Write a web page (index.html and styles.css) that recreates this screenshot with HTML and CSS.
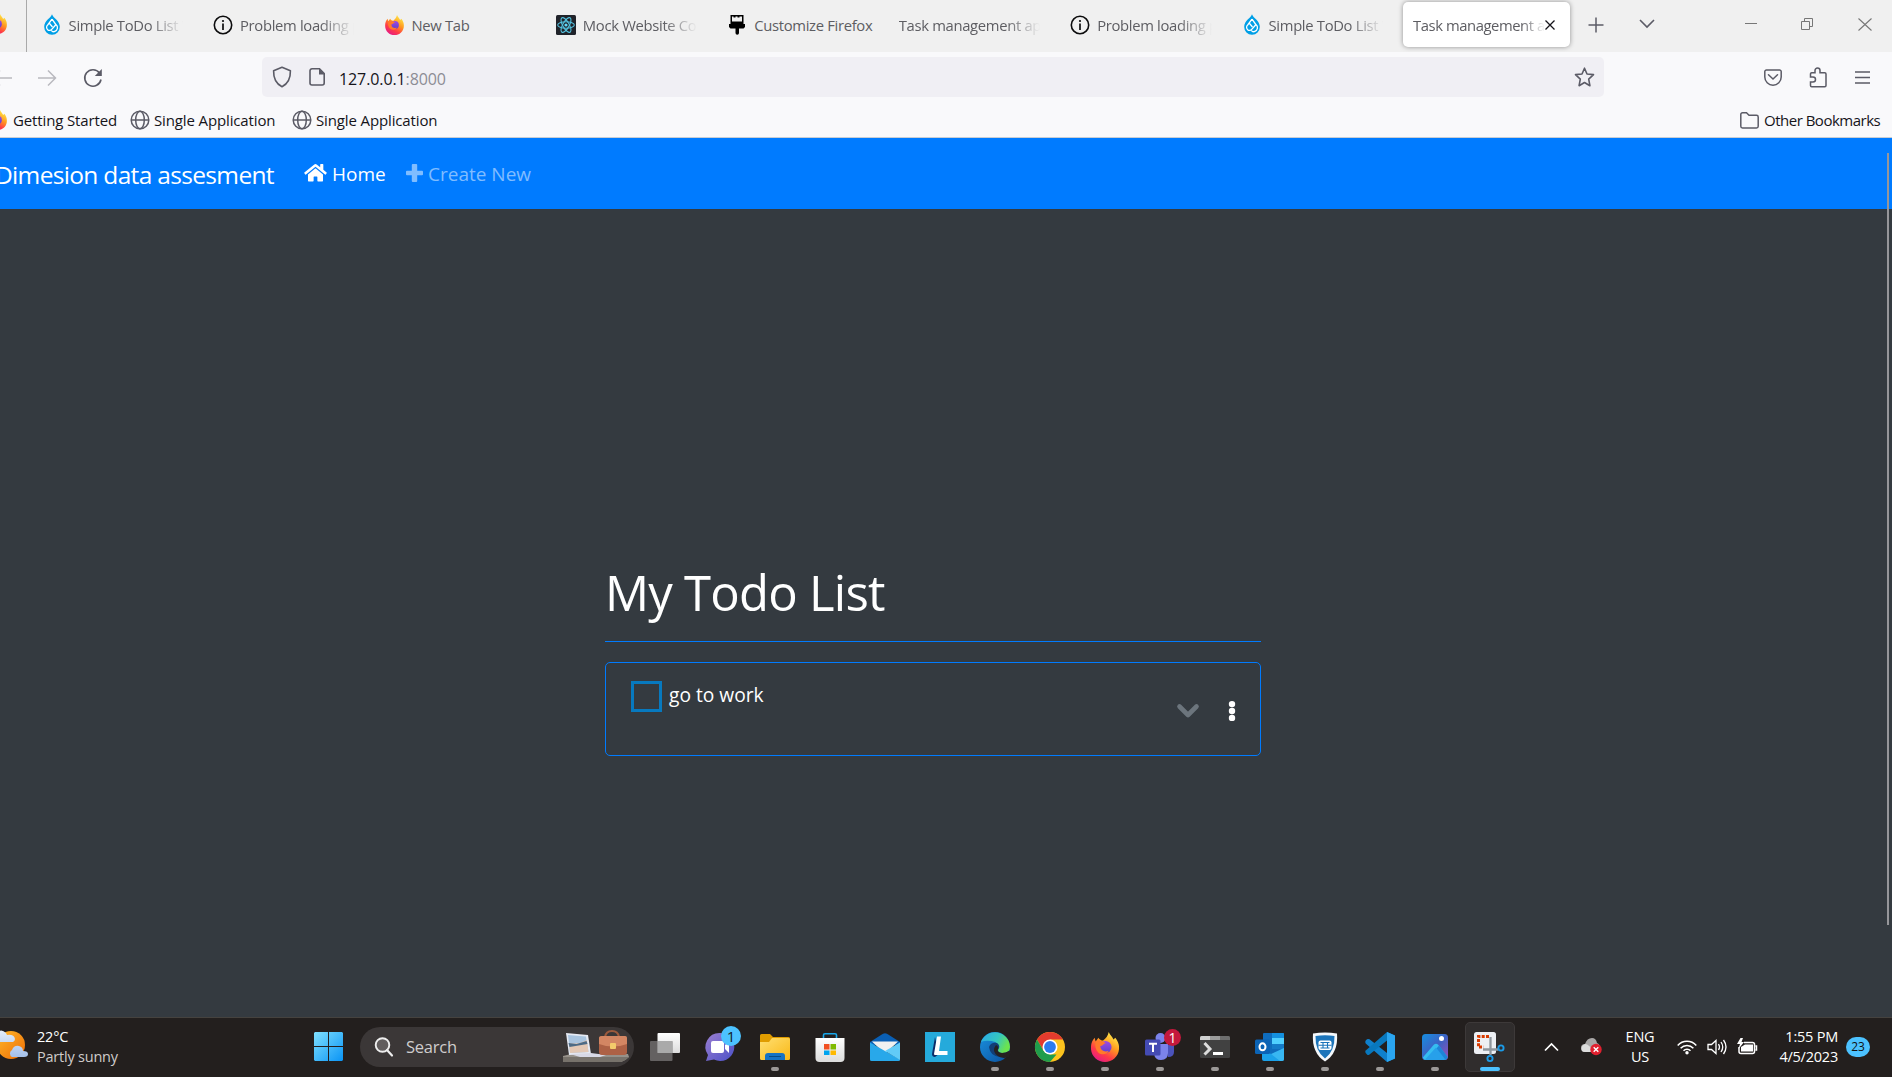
FILE: index.html
```html
<!DOCTYPE html>
<html lang="en">
<head>
<meta charset="utf-8">
<title>Task management app</title>
<link rel="stylesheet" href="styles.css">
</head>
<body>
<svg class="defs" aria-hidden="true">
  <defs>
    <linearGradient id="fxBody" x1=".8" y1="0" x2=".2" y2="1"><stop offset="0" stop-color="#fff44f"/><stop offset=".4" stop-color="#ff9a1f"/><stop offset=".7" stop-color="#ff3b47"/><stop offset="1" stop-color="#e01590"/></linearGradient>
    <linearGradient id="fxGlobe" x1="0" y1="0" x2="0" y2="1"><stop offset="0" stop-color="#a04be0"/><stop offset="1" stop-color="#5b3fd0"/></linearGradient>
    <linearGradient id="win" x1="0" y1="0" x2="1" y2="1"><stop offset="0" stop-color="#7fe0ff"/><stop offset="1" stop-color="#0a94f5"/></linearGradient>
    <linearGradient id="sun" x1="0" y1="0" x2="1" y2="1"><stop offset="0" stop-color="#ffb92a"/><stop offset="1" stop-color="#ee6c05"/></linearGradient>
    <linearGradient id="chat" x1="0" y1="0" x2="1" y2="1"><stop offset="0" stop-color="#9b7fd0"/><stop offset="1" stop-color="#4b50c8"/></linearGradient>
    <linearGradient id="folder" x1="0" y1="0" x2="1" y2="1"><stop offset="0" stop-color="#ffdf72"/><stop offset="1" stop-color="#f9b816"/></linearGradient>
    <linearGradient id="edgeTop" x1="0" y1="0" x2="1" y2=".4"><stop offset="0" stop-color="#2aa9ea"/><stop offset=".6" stop-color="#35c6c0"/><stop offset="1" stop-color="#6be34f"/></linearGradient>
    <linearGradient id="edgeLow" x1="0" y1="0" x2="1" y2="1"><stop offset="0" stop-color="#1a92e0"/><stop offset="1" stop-color="#0b4f9c"/></linearGradient>
    <linearGradient id="photo" x1="0" y1="0" x2="1" y2="1"><stop offset="0" stop-color="#168fe0"/><stop offset=".5" stop-color="#3c62c4"/><stop offset="1" stop-color="#9a50b8"/></linearGradient>
    <linearGradient id="white" x1="0" y1="0" x2="0" y2="1"><stop offset="0" stop-color="#fff"/><stop offset="1" stop-color="#dcdcdc"/></linearGradient>
    <linearGradient id="cloud" x1="0" y1="0" x2="0" y2="1"><stop offset="0" stop-color="#e4effc"/><stop offset="1" stop-color="#a3bfe9"/></linearGradient>
  </defs>
  <symbol id="firefox" viewBox="0 0 30 32">
    <path d="M19 0c1 3 4 5 5 8l2-2c3 4 4 7 4 11 0 9-7 15-15 15S0 26 0 17c0-4 1-8 4-11l1 4 3-4c1 2 3 3 5 3 3-2 5-5 6-9z" fill="url(#fxBody)"/>
    <circle cx="15.500" cy="16" r="6.500" fill="url(#fxGlobe)"/>
    <path d="M5 10c4-2 8 0 11 2-3 0-3 3-6 3 0 5 5 7 9 5-2 4-7 5-11 2-3-3-4-7-3-12z" fill="#ff7a2a"/>
  </symbol>
  <symbol id="drupal" viewBox="0 0 16 21">
    <path d="M8 .3c1 3.600 7.800 6.500 7.800 12.500A7.700 7.700 0 0 1 8 20.700 7.700 7.700 0 0 1 .2 12.800C.2 6.800 7 3.900 8 .3z" fill="#009fe6"/>
    <path d="M8 5.200 11.500 10M8 5.200 3.700 11a3 3 0 1 0 4.500 3.800L12 10.500a4 4 0 0 1-1.500 7q-2 .8-3-1M5.500 9.500l3 3.500" fill="none" stroke="#fff" stroke-width="1.300"/>
  </symbol>
  <symbol id="info" viewBox="0 0 20 20">
    <circle cx="10" cy="10" r="8.700" fill="none" stroke="#0c0c0d" stroke-width="1.600"/>
    <path d="M10 8.500V15" stroke="#0c0c0d" stroke-width="1.700"/><circle cx="10" cy="6" r="1.100" fill="#0c0c0d"/>
  </symbol>
  <symbol id="globe" viewBox="0 0 20 20">
    <g fill="none" stroke="#5b5b66" stroke-width="1.500"><circle cx="10" cy="10" r="8.800"/><ellipse cx="10" cy="10" rx="4.300" ry="8.800"/><path d="M1 10h18"/></g>
  </symbol>
</svg>

<header class="tabs">
  <div class="pinned"><svg class="fox"><use href="#firefox"/></svg></div>
  <div class="tab"><span class="ico"><svg width="16" height="21"><use href="#drupal"/></svg></span><span class="label fade">Simple ToDo List W</span></div>
  <div class="tab"><span class="ico"><svg width="20" height="20"><use href="#info"/></svg></span><span class="label fade">Problem loading page</span></div>
  <div class="tab"><span class="ico"><svg class="fox"><use href="#firefox"/></svg></span><span class="label">New Tab</span></div>
  <div class="tab"><span class="ico"><svg width="20" height="20" viewBox="0 0 20 20"><rect width="20" height="20" rx="1.500" fill="#20232a"/><g fill="none" stroke="#53c1de" stroke-width="1.100"><ellipse cx="10" cy="10" rx="8.300" ry="3.200"/><ellipse cx="10" cy="10" rx="8.300" ry="3.200" transform="rotate(60 10 10)"/><ellipse cx="10" cy="10" rx="8.300" ry="3.200" transform="rotate(120 10 10)"/></g><circle cx="10" cy="10" r="1.600" fill="#61dafb"/></svg></span><span class="label fade">Mock Website Content</span></div>
  <div class="tab"><span class="ico"><svg width="16" height="20" viewBox="0 0 16 20"><path d="M1.500 0h13v9h1.500v3l-1.500 1.500H10V18a1.500 1.500 0 0 1-3.500 0v-4.500H1.500L0 12V9h1.500z" fill="#000"/><path d="M3 1.500h1.500v1h2v-1h2v1h2v-1H13V6.500H3z" fill="#f0f0f0"/></svg></span><span class="label">Customize Firefox</span></div>
  <div class="tab bare"><span class="label fade">Task management app</span></div>
  <div class="tab"><span class="ico"><svg width="20" height="20"><use href="#info"/></svg></span><span class="label fade">Problem loading page</span></div>
  <div class="tab"><span class="ico"><svg width="16" height="21"><use href="#drupal"/></svg></span><span class="label fade">Simple ToDo List W</span></div>
  <div class="tab bare active"><span class="label fade">Task management app</span><svg width="10" height="10" viewBox="0 0 10 10"><path d="M.5.5l9 9M9.500.5l-9 9" stroke="#15141a" stroke-width="1.300"/></svg></div>
  <svg class="add" width="16" height="16" viewBox="0 0 16 16"><path d="M8 .5v15M.5 8h15" stroke="#5b5b66" stroke-width="1.500"/></svg>
  <svg class="all" width="16" height="10" viewBox="0 0 16 10"><path d="M1 1l7 7 7-7" fill="none" stroke="#5b5b66" stroke-width="1.600"/></svg>
  <div class="winbtns">
    <svg width="12" height="14" viewBox="0 0 12 14"><path d="M0 6.500h12" stroke="#777"/></svg>
    <svg width="12" height="12" viewBox="0 0 12 12"><path d="M.5 3.500h8v8h-8zM3.500 3.500v-3h8v8h-3" fill="none" stroke="#777"/></svg>
    <svg width="14" height="13" viewBox="0 0 14 13"><path d="M.5.500l13 12M13.500.500l-13 12" stroke="#777" stroke-width="1.100"/></svg>
  </div>
</header>

<div class="toolbar">
  <svg class="back" width="15" height="18" viewBox="0 0 15 18"><path d="M0 9h15M3 1.500-4.500 9 3 16.500" fill="none" stroke="#b9b9bf" stroke-width="1.500"/></svg>
  <svg class="fwd" width="19" height="18" viewBox="0 0 19 18"><path d="M0 9h18M10 1.500 17.500 9 10 16.500" fill="none" stroke="#b9b9bf" stroke-width="1.500"/></svg>
  <svg class="reload" width="20" height="20" viewBox="0 0 20 20"><path d="M16.500 5A8.200 8.200 0 1 0 18 11.500" fill="none" stroke="#5b5b66" stroke-width="1.600"/><path d="M18.800 1v7h-7z" fill="#5b5b66"/></svg>
  <div class="url">
    <svg class="shield" width="20" height="22" viewBox="0 0 20 22"><path d="M10 1.200 18.400 4.800C18.600 12 16.500 17.500 10 20.800 3.500 17.500 1.400 12 1.600 4.800z" fill="none" stroke="#5b5b66" stroke-width="1.600" stroke-linejoin="round"/></svg>
    <svg class="page" width="17" height="20" viewBox="0 0 17 20"><path d="M3 1.800h7.500L15.200 6.500V16a2 2 0 0 1-2 2H3a2 2 0 0 1-2-2V3.800a2 2 0 0 1 2-2z" fill="none" stroke="#5b5b66" stroke-width="1.600"/><path d="M10 1.500v6h6z" fill="#5b5b66"/></svg>
    <span class="addr">127.0.0.1<em>:8000</em></span>
    <svg class="star" width="21" height="20" viewBox="0 0 21 20"><path d="M10.500 1.200 13 7l6.500.6-4.800 4.500 1.200 6.600-5.400-3.200-5.400 3.200 1.200-6.600L1.500 7.600 8 7z" fill="none" stroke="#5b5b66" stroke-width="1.600" stroke-linejoin="round"/></svg>
  </div>
  <svg class="pocket" width="18" height="17" viewBox="0 0 18 17"><path d="M2.500 1h13A1.600 1.600 0 0 1 17.200 2.600V8A8.200 8.200 0 0 1 .8 8V2.600A1.600 1.600 0 0 1 2.500 1zM4.500 5.800 9 10l4.500-4.200" fill="none" stroke="#5b5b66" stroke-width="1.500" stroke-linecap="round"/></svg>
  <svg class="puzzle" width="18" height="21" viewBox="0 0 18 21"><path d="M1.500 10V7a1.200 1.200 0 0 1 1.200-1.200H6V3.500a2.500 2.500 0 0 1 5 0v2.300h4.800A1.200 1.200 0 0 1 17 7v11.600a1.200 1.200 0 0 1-1.200 1.200H2.700a1.200 1.200 0 0 1-1.200-1.200V15H4a2.500 2.500 0 0 0 0-5z" fill="none" stroke="#5b5b66" stroke-width="1.500"/></svg>
  <svg class="menu" width="15" height="13" viewBox="0 0 15 13"><path d="M0 1h15M0 6.500h15M0 12h15" stroke="#5b5b66" stroke-width="1.300"/></svg>
</div>

<nav class="bookmarks">
  <svg class="fox cut"><use href="#firefox"/></svg><span class="bm1">Getting Started</span>
  <svg class="g1" width="20" height="20"><use href="#globe"/></svg><span class="bm">Single Application</span>
  <svg class="g2" width="20" height="20"><use href="#globe"/></svg><span class="bm">Single Application</span>
  <svg class="fold" width="19" height="17" viewBox="0 0 19 17"><path d="M2.500.800H6.500L9 3.300h7.500A1.700 1.700 0 0 1 18.200 5v9.300A1.700 1.700 0 0 1 16.500 16h-14A1.700 1.700 0 0 1 .8 14.300V2.500A1.700 1.700 0 0 1 2.500.8z" fill="none" stroke="#5b5b66" stroke-width="1.500"/></svg><span class="other">Other Bookmarks</span>
</nav>

<div class="site">
  <nav class="navbar">
    <span class="brand">Dimesion data assesment</span>
    <svg class="home" width="23" height="18" viewBox="0 0 576 460"><path d="M280 116 96 267v164a16 16 0 0 0 16 16h112a16 16 0 0 0 16-16v-96a16 16 0 0 1 16-16h64a16 16 0 0 1 16 16v96a16 16 0 0 0 16 16h112a16 16 0 0 0 16-16V267L296 116a12 12 0 0 0-16 0zM572 219l-84-69V12a12 12 0 0 0-12-12h-56a12 12 0 0 0-12 12v72L318 11a48 48 0 0 0-61 0L4 219a12 12 0 0 0-1 17l25 31a12 12 0 0 0 17 1L280 75a12 12 0 0 1 16 0l235 193a12 12 0 0 0 17-1l25-31a12 12 0 0 0-1-17z" fill="#fff"/></svg>
    <span class="homelink">Home</span>
    <svg class="plus" width="17" height="18" viewBox="0 0 17 18"><path d="M6.800 0h3.400a1 1 0 0 1 1 1v5.700H16a1 1 0 0 1 1 1v2.600a1 1 0 0 1-1 1h-4.800V17a1 1 0 0 1-1 1H6.800a1 1 0 0 1-1-1v-5.700H1a1 1 0 0 1-1-1V7.700a1 1 0 0 1 1-1h4.800V1a1 1 0 0 1 1-1z" fill="#80bdff"/></svg>
    <span class="create">Create New</span>
  </nav>
  <div class="scroll"></div>
  <main>
    <h1><span>My Todo List</span></h1>
    <section class="card">
      <span class="box"></span><span class="todo">go to work</span>
      <svg class="chev" width="22" height="14" viewBox="0 0 22 14"><path d="M2.500 2.500 11 11l8.500-8.500" fill="none" stroke="#6c757d" stroke-width="4.600" stroke-linejoin="round" stroke-linecap="round"/></svg>
      <svg class="dots" width="8" height="20" viewBox="0 0 8 20" fill="#fff"><circle cx="4" cy="3.100" r="3.200"/><circle cx="4" cy="10" r="3.200"/><circle cx="4" cy="16.900" r="3.200"/></svg>
    </section>
  </main>
</div>

<footer class="taskbar">
  <svg class="weather" width="29" height="30" viewBox="0 0 29 30"><circle cx="12" cy="15" r="14" fill="url(#sun)"/><path d="M-2 12V3q4-5 9 0 1 2 1 2 7-1 8 4 0 2-2 3zM13 27a4 4 0 0 1 0-7q2-5 7-4 4 1 4 5 5 0 5 3t-4 3z" fill="url(#cloud)"/></svg>
  <div class="wtext"><span class="temp">22°C</span><span class="cond">Partly sunny</span></div>
  <svg class="start" width="29" height="29" viewBox="0 0 29 29"><path d="M1 0h13v14H0V1zM15 0h13l1 1v13H15zM0 15h14v14H1l-1-1zM15 15h14v13l-1 1H15z" fill="url(#win)"/></svg>
  <div class="search">
    <svg class="mag" width="20" height="20" viewBox="0 0 20 20"><circle cx="8.500" cy="8" r="6.800" fill="#615d5d" stroke="#eee" stroke-width="1.900"/><path d="M13 13l5 5.500" stroke="#eee" stroke-width="2.200" stroke-linecap="round"/></svg>
    <span>Search</span>
    <svg class="desk" width="67" height="33" viewBox="0 0 67 33">
      <path d="M0 26 8 24h57l1 3q-4 4-8 5H0z" fill="#96918a"/><path d="M0 27h66q-4 4-8 5H0z" fill="#77726b"/>
      <path d="M3 3l22 2 3 19-22 1z" fill="#e6eaf3"/><path d="M5 5l18 1.600 2.500 15.400L7 23z" fill="#a9c4df"/><path d="M6 13q9 2 18-3l1.500 12L7 23z" fill="#e3c8b5"/><path d="M5.500 13l8 1 10-3 1 3-18 3z" fill="#4d6b86"/><path d="M7 24l21-1 15 2-6 2H17z" fill="#d8d9e6"/>
      <path d="M42 7q1-6 7-6t7 6" fill="none" stroke="#9d5a3c" stroke-width="2"/><rect x="36" y="6" width="28" height="19" rx="3" fill="#ad6145"/><path d="M36 8q0-2 3-2h23q2 0 2 2v6q-14 5-28 0z" fill="#d38663"/><rect x="47" y="13" width="6" height="6" rx="1" fill="#f3ca6b"/>
    </svg>
  </div>
  <div class="apps">
    <div class="app"><svg viewBox="0 0 30 30"><rect x="7.500" y="1" width="22.500" height="20" rx="1" fill="url(#white)"/><rect x="0" y="9" width="22.500" height="20" rx="1" fill="#747272" fill-opacity=".8"/><path d="M7.500 9h15v12h-15z" fill="#aaa"/></svg></div>
    <div class="app"><svg viewBox="0 0 30 30"><path d="M15 1a14 14 0 1 1-6 26.500L1 29q1-3 2-6A14 14 0 0 1 15 1z" fill="url(#chat)"/><rect x="6" y="9" width="13" height="12" rx="2" fill="#fff"/><path d="M20 13l4-3v11l-4-4z" fill="#fff"/></svg><b class="badge sky">1</b></div>
    <div class="app run"><svg viewBox="0 0 30 30"><path d="M0 3.500A1.500 1.500 0 0 1 1.500 2H10l3 3h15.500A1.500 1.500 0 0 1 30 6.500V12H0z" fill="#e09c00"/><path d="M0 10h9l3-4h16.500A1.500 1.500 0 0 1 30 7.500v19a1.500 1.500 0 0 1-1.500 1.500h-27A1.500 1.500 0 0 1 0 26.500z" fill="url(#folder)"/><path d="M5 28v-4q0-3 3-3h14q3 0 3 3v4z" fill="#1673c4"/><path d="M9 24.500h12" stroke="#084c86"/></svg></div>
    <div class="app"><svg viewBox="0 0 30 30"><path d="M8.500 7V3q0-1.300 1.500-1.300h10q1.500 0 1.500 1.300v4" fill="none" stroke="#18a7ea" stroke-width="1.600"/><path d="M.5 6h29v20q0 4-4 4h-21q-4 0-4-4z" fill="url(#white)"/><path d="M9 12h5.500v5.500H9z" fill="#f25022"/><path d="M15.500 12H21v5.500h-5.500z" fill="#7fba00"/><path d="M9 18.500h5.500V23H9z" fill="#00a4ef"/><path d="M15.500 18.500H21V23h-5.500z" fill="#ffb900"/></svg></div>
    <div class="app"><svg viewBox="0 0 30 30"><path d="M0 10 13 1.800q2-1.200 4 0L30 10v3H0z" fill="#0a5fb4"/><path d="M2 9.500h26L15 22z" fill="#f1f1f1"/><path d="M0 10.500 30 27.500V28q0 1-1.500 1h-27Q0 29 0 27.500z" fill="#28a8ea"/><path d="M30 10.500 15 19l15 9z" fill="#62cbf7"/></svg></div>
    <div class="app"><svg viewBox="0 0 30 30"><rect width="30" height="30" fill="#25aadb"/><path d="M10 5 7 22q0 3 3 3l4-3z" fill="#0b2c69"/><path d="M12 4.500h4L14 19h8.500v4H10q-1 0-1-1z" fill="#fff"/></svg></div>
    <div class="app run"><svg viewBox="0 0 30 30"><circle cx="15" cy="15" r="15" fill="url(#edgeLow)"/><path d="M1 10A15 15 0 0 1 30 15q0 6-8 6-5 0-4.500-3 3-8-6-9Q5 8 1 10z" fill="url(#edgeTop)"/><path d="M9 15q2-5 8-4 4 3 1 7 0 3 4.500 3 4 0 5.500-1-3 5-8 5-10-1-11-10z" fill="#123e75"/><path d="M16 13q3 1 1.700 5 0 2.500 4.300 3 4 0 6.800-2l2.200 1-2 5-5 1q-8-1-10-7 0-4 2-6z" fill="#262121"/></svg></div>
    <div class="app run"><svg viewBox="0 0 30 30"><circle cx="15" cy="15" r="15" fill="#fcc31e"/><path d="M2 7.500A15 15 0 0 1 28 7.500H15l-6.500 11z" fill="#e33b2e"/><path d="M2 7.500 8.500 18.700 15 22.500h6.500L15 30A15 15 0 0 1 2 7.500z" fill="#1f9d4c"/><circle cx="15" cy="15" r="7.500" fill="#fff"/><circle cx="15" cy="15" r="5.900" fill="#2b7bee"/></svg></div>
    <div class="app run"><svg viewBox="0 0 30 32"><use href="#firefox" width="30" height="32"/></svg></div>
    <div class="app run"><svg viewBox="0 0 30 30"><circle cx="15.500" cy="6" r="5" fill="#7b83eb"/><path d="M22 13h7v7q0 5-6 5z" fill="#4b53bc"/><path d="M9 12h14v9q0 7-7 7-6 0-7-6z" fill="#7b83eb"/><rect x="0" y="7.500" width="15.500" height="16" rx="1.500" fill="#444bb3"/><path d="M4 11.800h8M8 12v8" stroke="#fff" stroke-width="2"/></svg><b class="badge red">1</b></div>
    <div class="app run"><svg viewBox="0 0 30 30"><rect y="4" width="30" height="22" rx="1.500" fill="#414141"/><path d="M0 8V5.500Q0 4 1.500 4H10v4z" fill="#d0d0d0"/><path d="M10 4h10v4H10z" fill="#9b9b9b"/><path d="M20 4h8.500Q30 4 30 5.500V8H20z" fill="#6e6e6e"/><path d="M4.500 11 10 17l-5.500 5.500" fill="none" stroke="#ddd" stroke-width="3"/><path d="M13 21.500h10" stroke="#fff" stroke-width="3"/></svg></div>
    <div class="app run"><svg viewBox="0 0 30 30"><rect x="8" y="1" width="21" height="22" rx="1" fill="#0f6cbd"/><path d="M17 1h11q1 0 1 1v4H17z" fill="#1490df"/><path d="M17 6h12v6H17z" fill="#50d0ff"/><path d="M17 12h12v5H17z" fill="#157bc8"/><path d="M7 17l11 6 11-7v11q0 2-2 2H9q-2 0-2-2z" fill="#1ba1e9"/><path d="M29 16v11q0 2-2 2h-2L16 22z" fill="#38b7f2"/><rect y="7.500" width="15" height="14.500" rx="1.500" fill="#0b63b5"/><ellipse cx="7.500" cy="14.800" rx="3" ry="3.500" fill="none" stroke="#fff" stroke-width="2"/></svg></div>
    <div class="app run"><svg viewBox="0 0 30 30"><path d="M3 1.500Q15-.5 27 1.500 28.500 21 15 29.500 1.500 21 3 1.500z" fill="#f5f8fb"/><path d="M5.500 4q9.500-1.500 19 0 .5 15-9.500 22.500Q5 19 5.500 4z" fill="#1b74ba"/><rect x="8.500" y="8.500" width="13" height="9.500" rx="2" fill="#fff"/><path d="M8.500 13.200h13M13 10.500v6M17.500 10.500v6M10.500 10.500h9M10.500 16h9" stroke="#1b74ba" stroke-width="1.100"/></svg></div>
    <div class="app run"><svg viewBox="0 0 30 30"><path d="M22 0 30 3.500v23L22 30 .7 11.500q-1-1.500 0-3L2 7.300q1-.8 2.500 0L22 21z" fill="#0f80cc"/><path d="M22 8.500 4.500 22.500q-1.500 1-2.500 0L.7 21q-1-1.200 0-2.500L22 0z" fill="#0878be"/><path d="M22 0 30 3.500v23L22 30z" fill="#2aa5f0"/></svg></div>
    <div class="app run"><svg viewBox="0 0 30 30"><rect x="2" y="2" width="26" height="26" rx="3.500" fill="url(#photo)"/><path d="M2.800 25.500 14 12.500q2-1.500 4 0L27.500 25q-1 3-3.500 3H6q-2.500 0-3.200-2.500z" fill="#35bdf0"/><path d="M16 17l3-3.500L27.700 25q-.7 3-3.700 3h-2z" fill="#1d84d8"/><path d="M5 27.500 16 15.500 25 27q-.5 1-1 1H6z" fill="#27a0ea"/><circle cx="21.500" cy="6.500" r="2.500" fill="#fff"/></svg></div>
    <div class="app cur"><svg viewBox="0 0 30 30"><rect x="-1" y="0" width="22" height="22" rx="2.500" fill="#edf0f4"/><path d="M14 4.500H3.500V15h5" fill="none" stroke="#d83b01" stroke-width="3" stroke-dasharray="3 1.300"/><path d="M15.500 5v18M8 17.500h15" fill="none" stroke="#8f979e" stroke-width="2.300"/><circle cx="26" cy="16" r="2.600" fill="none" stroke="#1b9be8" stroke-width="1.900"/><circle cx="15" cy="26.500" r="2.600" fill="none" stroke="#1b9be8" stroke-width="1.900"/></svg></div>
  </div>
  <svg class="up" width="15" height="10" viewBox="0 0 15 10"><path d="M1 8.500l6.500-6.500L14 8.500" fill="none" stroke="#fff" stroke-width="1.700"/></svg>
  <svg class="drive" width="21" height="18" viewBox="0 0 21 18"><path d="M4 14a4 4 0 0 1 0-8q2-6 7-6 4 0 5 5 3 1 3 5t-4 4z" fill="#a9a7a7"/><path d="M1 13q-2-5 3-7 4 0 9 8H4q-2 0-3-1z" fill="#ddd"/><circle cx="15" cy="11.500" r="5.700" fill="#e0202f"/><path d="M12.700 9.200l4.600 4.600M17.300 9.200l-4.600 4.600" stroke="#fff" stroke-width="1.400"/></svg>
  <div class="lang"><span>ENG</span><span>US</span></div>
  <svg class="wifi" width="20" height="16" viewBox="0 0 20 16"><g fill="none" stroke="#fff" stroke-width="1.500"><path d="M.7 6.500a12.500 12.500 0 0 1 18.600 0M3.600 9.200a8.700 8.700 0 0 1 12.800 0M6.500 11.800a4.800 4.800 0 0 1 7 0"/></g><circle cx="10" cy="13.700" r="1.700" fill="#fff"/></svg>
  <svg class="vol" width="20" height="16" viewBox="0 0 20 16"><path d="M1 5.500h3.500L9 1.500v13L4.500 10.500H1zM11.500 5q2 3 0 6M14 3q3.500 5 0 10M16.500 1q5 7 0 14" fill="none" stroke="#fff" stroke-width="1.300"/></svg>
  <svg class="bat" width="21" height="18" viewBox="0 0 21 18"><path d="M7 4.500h8.500a2 2 0 0 1 2 2v7a2 2 0 0 1-2 2H4a2 2 0 0 1-2-2V9M18.500 8h1v4h-1" fill="none" stroke="#fff" stroke-width="1.500"/><path d="M4 9l4-2.500h8v7H4z" fill="#fff"/><path d="M3.500 0 0 6h3L1.500 11 7 4H4.500L6 0z" fill="#fff"/></svg>
  <div class="clock"><span>1:55 PM</span><span>4/5/2023</span></div>
  <b class="count">23</b>
</footer>
</body>
</html>
```
FILE: styles.css
```css
* { box-sizing: border-box; }
html, body { margin: 0; height: 100%; overflow: hidden; }
body { display: flex; flex-direction: column; width: 1892px; height: 1077px; font-family: "Open Sans", "Noto Sans", sans-serif; background: #343a40; }
svg { display: block; flex: none; overflow: visible; }
span, b { white-space: nowrap; flex: none; }
.defs { position: absolute; width: 0; height: 0; }
.fox { width: 19px; height: 20px; }

.tabs { height: 52px; flex: none; display: flex; align-items: center; background: #f0f0f0; font-size: 14.8px; letter-spacing: -.32px; color: #5d5d62; }
.pinned { width: 27px; height: 52px; border-right: 1px solid #a9a9a9; margin-right: 2.600px; display: flex; align-items: center; flex: none; padding-bottom: 4px; }
.pinned .fox { margin-left: -12px; }
.tab { width: 171.430px; height: 52px; flex: none; display: flex; align-items: center; padding: 0 14px 3px 12px; }
.ico { width: 20px; margin-right: 7px; display: flex; justify-content: center; }
.label { flex: 1 1 0; min-width: 0; overflow: hidden; padding-top: 1px; }
.fade { -webkit-mask-image: linear-gradient(to left, transparent 4px, #000 38px); mask-image: linear-gradient(to left, transparent 4px, #000 38px); }
.active { width: 167px; height: 45px; margin: 0 2px 3px; background: #fff; border-radius: 5px; box-shadow: 0 0 5px rgba(0,0,0,.4); padding: 0 15px 0 10px; }
.active .label { padding-top: 1px; letter-spacing: -.42px; }
.active .fade { -webkit-mask-image: linear-gradient(to left, transparent, #000 24px); mask-image: linear-gradient(to left, transparent, #000 24px); }
.add { margin: 0 0 3px 16px; }
.all { margin: 0 0 4px 35px; }
.winbtns { display: flex; gap: 44.500px; margin: 0 0 4px 90px; align-items: center; }

.toolbar { height: 51px; flex: none; display: flex; align-items: center; background: #f9f9fb; }
.back { margin-left: -3px; }
.fwd { margin-left: 26px; }
.reload { margin-left: 26px; }
.url { width: 1342px; height: 40px; margin-left: 159px; margin-top: -1px; background: #f0eff4; border-radius: 5px; display: flex; align-items: center; padding: 0 9px 0 10px; }
.page { margin-left: 17px; }
.addr { margin-left: 13px; font-size: 16px; letter-spacing: -.1px; color: #15141a; padding-top: 3px; }
.addr em { font-style: normal; color: #8c8c94; }
.star { margin-left: auto; }
.pocket { margin-left: 160px; }
.puzzle { margin-left: 27px; }
.menu { margin-left: 28px; }

.bookmarks { height: 35px; flex: none; display: flex; align-items: center; background: #f9f9fb; border-bottom: 1px solid #c8cdd4; font-size: 15px; letter-spacing: -.13px; color: #15141a; }
.cut { margin-left: -12px; }
.bm1 { margin-left: 6px; width: 101px; }
.g1 { margin-left: 16px; }
.g2 { margin-left: 0; }
.bm { margin-left: 4px; width: 138px; }
.fold { margin-left: auto; }
.other { margin: 0 14px 0 5px; width: 114px; letter-spacing: -.5px; }

.site { position: relative; height: 879px; flex: none; background: #343a40; }
.navbar { height: 71px; background: #007bff; color: #fff; display: flex; align-items: center; padding-top: 1px; }
.brand { margin-left: -5px; width: 309px; font-size: 24.500px; letter-spacing: -.67px; }
.homelink, .create { font-size: 19px; }
.home, .plus { margin-top: -2px; }
.homelink { margin-left: 5px; width: 74px; }
.create { margin-left: 5px; color: #80bdff; }
.scroll { position: absolute; right: 3px; top: 15px; width: 2px; height: 772px; background: #96969a; }
main { width: 656px; margin: 343px 0 0 605px; color: #fff; }
h1 { margin: 0 0 20px; height: 90px; border-bottom: 1px solid #007bff; font-size: 49px; font-weight: 400; line-height: 80px; letter-spacing: -.75px; }
.card { height: 94px; border: 1px solid #007bff; border-radius: 5px; display: flex; padding: 18px 24px 18px 25px; }
.box { width: 31px; height: 31px; border: 3px solid #0779bf; }
.todo { margin-left: 7px; font-size: 19.200px; line-height: 27px; }
.chev { margin: 23px 0 0 auto; }
.dots { margin: 20px 0 0 29px; }

.taskbar { height: 60px; flex: none; display: flex; align-items: center; background: #231f1e; border-top: 1px solid #45423f; color: #fff; font-size: 14.500px; letter-spacing: -.22px; line-height: 20px; padding-bottom: 2px; }
.weather { margin-left: -1px; margin-top: -4px; }
.wtext, .lang, .clock { display: flex; flex-direction: column; }
.wtext { margin-left: 9px; width: 277px; }
.cond { color: #cfcccb; }
.search { width: 274px; height: 40px; margin-left: 17px; border-radius: 20px; background: #3b3737; display: flex; align-items: center; padding-left: 14px; font-size: 16.500px; color: #cfcdcd; }
.search span { margin-left: 12px; width: 157px; }
.apps { margin-left: 6px; display: flex; }
.app { position: relative; width: 50px; margin-right: 5px; height: 50px; border-radius: 5px; display: flex; align-items: center; justify-content: center; }
.app svg { width: 30px; height: 30px; }
.run::after, .cur::after { content: ""; position: absolute; left: 21px; bottom: 1px; width: 8px; height: 4px; border-radius: 2px; background: #9b9897; }
.cur { background: #302d2d; border: 1px solid #3d3939; }
.cur::after { left: 14px; bottom: 0; width: 20px; background: #4cc2ff; }
.badge { position: absolute; border-radius: 50%; font-weight: 400; text-align: center; letter-spacing: 0; }
.sky { width: 20px; height: 20px; right: 4px; top: 4px; background: #4cc2ff; color: #14202b; line-height: 20px; font-size: 15px; }
.red { width: 17px; height: 17px; right: 4px; top: 7px; background: #c4193c; color: #fff; line-height: 17px; font-size: 14px; }
.up { margin-left: 24px; }
.drive { margin-left: 22px; }
.lang { margin-left: 23px; width: 30px; align-items: center; }
.wifi { margin-left: 22px; }
.vol { margin-left: 10px; }
.bat { margin-left: 10px; }
.clock { margin-left: 15px; width: 65px; align-items: flex-end; }
.count { margin-left: 8px; width: 24px; height: 20px; border-radius: 10px; background: #4cc2ff; color: #111; text-align: center; font-size: 12px; font-weight: 400; letter-spacing: 0; }
```
